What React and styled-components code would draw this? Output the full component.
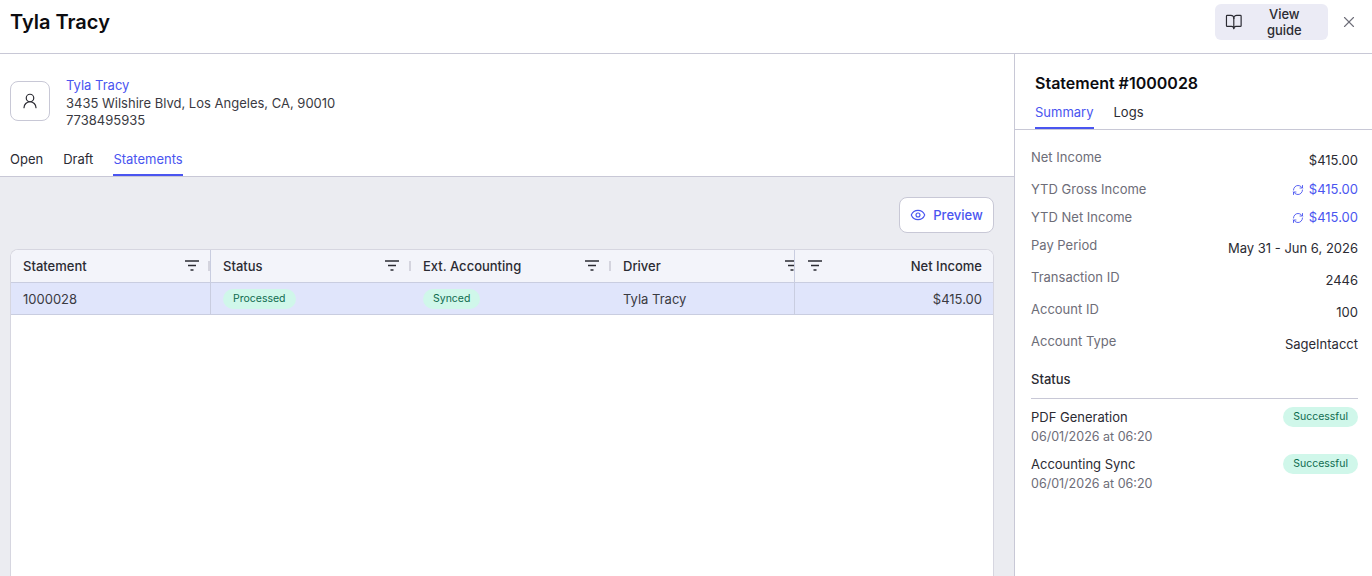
import React from 'react'
import styled, { createGlobalStyle } from 'styled-components'
import { BookOpen, X, UserRound, Eye, RefreshCw } from 'lucide-react'

const GlobalStyle = createGlobalStyle`
  html, body {
    margin: 0;
    padding: 0;
    height: 100%;
    overflow: hidden;
    background: #fff;
    font-family: Inter, "Liberation Sans", sans-serif;
    color: #2b2b33;
  }
  * { box-sizing: border-box; }
`

const Page = styled.div`
  width: 1372px;
  height: 576px;
  display: flex;
  flex-direction: column;
  overflow: hidden;
`

const TopBar = styled.header`
  height: 54px;
  flex: none;
  display: flex;
  align-items: center;
  justify-content: space-between;
  padding: 0 14px 10px 10px;
  padding-bottom: 10px;
  border-bottom: 1px solid #c8c8d6;
`

const Title = styled.h1`
  margin: 0;
  font-size: 20px;
  line-height: 24px;
  font-weight: 600;
  color: #0c0c10;
`

const TopActions = styled.div`
  display: flex;
  align-items: center;
  gap: 12px;
`

const GuideButton = styled.button`
  height: 36px;
  width: 113px;
  padding: 0 10px;
  display: flex;
  align-items: center;
  gap: 8px;
  border: 0;
  border-radius: 6px;
  background: #ebebf5;
  color: #2b2b33;
  font: 500 13px Inter, sans-serif;
`

const CloseButton = styled.span`
  display: flex;
  color: #6d6d78;
`

const Body = styled.div`
  flex: 1;
  min-height: 0;
  display: flex;
`

const Main = styled.main`
  width: 1014px;
  flex: none;
  display: flex;
  flex-direction: column;
`

const DriverPanel = styled.section`
  height: 123px;
  flex: none;
  padding-top: 23px;
  background: #fff;
  border-bottom: 1px solid #c8c8d6;
  display: flex;
  flex-direction: column;
  justify-content: space-between;
`

const DriverInfo = styled.div`
  display: flex;
  gap: 16px;
  padding-left: 10px;
`

const Avatar = styled.div`
  width: 40px;
  height: 40px;
  margin-top: 4px;
  display: flex;
  align-items: center;
  justify-content: center;
  border: 1px solid #c8c8d6;
  border-radius: 8px;
  color: #2b2b33;
`

const DriverLines = styled.div`
  font-size: 13px;
  line-height: 17.5px;
  color: #3a3a42;
`

const DriverName = styled.div`
  color: #4a55f0;
`

const Tabs = styled.nav`
  display: flex;
  gap: ${props => props.$gap}px;
  padding-left: ${props => props.$inset}px;
`

const Tab = styled.span`
  height: 25px;
  font-size: 13px;
  line-height: 17px;
  font-weight: 400;
  color: ${props => (props.$active ? '#4a55f0' : '#2b2b33')};
  border-bottom: 2px solid ${props => (props.$active ? '#4a55f0' : 'transparent')};
`

const Content = styled.div`
  flex: 1;
  min-height: 0;
  background: #ebecf1;
  padding: 20px 20px 0 10px;
  display: flex;
  flex-direction: column;
`

const Toolbar = styled.div`
  display: flex;
  justify-content: flex-end;
  margin-bottom: 16px;
`

const PreviewButton = styled.button`
  width: 95px;
  height: 36px;
  display: flex;
  align-items: center;
  justify-content: center;
  gap: 7px;
  background: #fff;
  border: 1px solid #c8c8d6;
  border-radius: 8px;
  color: #4a55f0;
  font: 500 13px Inter, sans-serif;
`

const Table = styled.div`
  flex: 1;
  min-height: 0;
  background: #fff;
  border: 1px solid #d6d6e0;
  border-bottom: 0;
  border-radius: 8px 8px 0 0;
  overflow: hidden;
`

const Row = styled.div`
  display: flex;
  height: ${props => (props.$head ? 33 : 32)}px;
  background: ${props => (props.$head ? '#f3f4fa' : '#e0e5fb')};
  border-bottom: 1px solid #c9cde0;
  font-size: 13px;
  font-weight: ${props => (props.$head ? 500 : 400)};
  color: ${props => (props.$head ? '#2b2b33' : '#3a3a42')};
`

const Cell = styled.div`
  position: relative;
  flex: none;
  width: ${props => props.$width}px;
  padding: 0 12px;
  display: flex;
  align-items: center;
  overflow: hidden;
  white-space: nowrap;
  justify-content: ${props => (props.$right ? 'flex-end' : 'flex-start')};
  border-right: ${props => (props.$pinned ? '1px solid #c9cde0' : '0')};
  border-left: ${props => (props.$pinnedLeft ? '1px solid #c9cde0' : '0')};
`

const FilterMark = styled.svg`
  position: absolute;
  top: 9px;
  left: ${props => props.$left}px;
  color: #2b2b33;
`

const Grip = styled.span`
  position: absolute;
  top: 11px;
  right: 0;
  width: 2px;
  height: 10px;
  background: #d4d4de;
`

const Pill = styled.span`
  display: inline-block;
  height: 20px;
  padding: 0 10px;
  line-height: 20px;
  border-radius: 10px;
  background: #d0f7ea;
  color: #0e6b4f;
  font-size: 10.5px;
  font-weight: 400;
`

const Side = styled.aside`
  flex: 1;
  min-width: 0;
  border-left: 1px solid #c8c8d6;
  display: flex;
  flex-direction: column;
`

const SideHead = styled.div`
  height: 76px;
  flex: none;
  padding-top: 19px;
  border-bottom: 1px solid #c8c8d6;
  display: flex;
  flex-direction: column;
  justify-content: space-between;
`

const SideTitle = styled.h2`
  margin: 0;
  padding-left: 20px;
  font-size: 16px;
  line-height: 20px;
  font-weight: 600;
  color: #0c0c10;
`

const SideBody = styled.div`
  padding: 19px 14px 0 16px;
`

const InfoRow = styled.div`
  display: flex;
  justify-content: space-between;
  height: ${props => props.$height}px;
  font-size: 13px;
  line-height: 17px;
`

const InfoLabel = styled.span`
  color: #6d6d78;
`

const InfoValue = styled.span`
  display: flex;
  align-items: center;
  gap: 5px;
  height: 17px;
  margin-top: ${props => props.$drop}px;
  color: ${props => (props.$link ? '#4a55f0' : '#2b2b33')};
`

const StatusHeading = styled.div`
  margin-top: 14px;
  padding-bottom: 10px;
  border-bottom: 1px solid #c8c8d6;
  font-size: 13px;
  line-height: 17px;
  font-weight: 500;
`

const StatusList = styled.div`
  padding-top: 8px;
  display: flex;
  flex-direction: column;
  gap: 8px;
`

const StatusItem = styled.div`
  display: flex;
  justify-content: space-between;
  align-items: flex-start;
`

const StatusName = styled.div`
  font-size: 13px;
  line-height: 20px;
  color: #2b2b33;
`

const StatusTime = styled.div`
  font-size: 12.5px;
  line-height: 19px;
  color: #6d6d78;
`

const Filter = ({ left }) => (
  <FilterMark $left={left} width="16" height="14" viewBox="0 0 16 14" fill="none" stroke="currentColor" strokeWidth="1.5">
    <path d="M1 2h14M4 6.5h8M6.5 11h3" />
  </FilterMark>
)

const columns = [
  { label: 'Statement', width: 200, filter: 173, pinned: true },
  { label: 'Status', width: 200, filter: 173 },
  { label: 'Ext. Accounting', width: 200, filter: 173 },
  { label: 'Driver', width: 183, filter: 173, clip: true },
]

const info = [
  { label: 'Net Income', value: '$415.00', height: 32, drop: 3 },
  { label: 'YTD Gross Income', value: '$415.00', height: 28, drop: 0, link: true },
  { label: 'YTD Net Income', value: '$415.00', height: 28, drop: 0, link: true },
  { label: 'Pay Period', value: 'May 31 - Jun 6, 2026', height: 32, drop: 3 },
  { label: 'Transaction ID', value: '2446', height: 32, drop: 3 },
  { label: 'Account ID', value: '100', height: 32, drop: 3 },
  { label: 'Account Type', value: 'SageIntacct', height: 24, drop: 3 },
]

const App = () => {
  return (
    <Page>
      <GlobalStyle />
      <TopBar>
        <Title>Tyla Tracy</Title>
        <TopActions>
          <GuideButton>
            <BookOpen size={18} strokeWidth={1.6} />
            View guide
          </GuideButton>
          <CloseButton><X size={18} strokeWidth={1.5} /></CloseButton>
        </TopActions>
      </TopBar>
      <Body>
        <Main>
          <DriverPanel>
            <DriverInfo>
              <Avatar><UserRound size={18} strokeWidth={1.6} /></Avatar>
              <DriverLines>
                <DriverName>Tyla Tracy</DriverName>
                <div>3435 Wilshire Blvd, Los Angeles, CA, 90010</div>
                <div>7738495935</div>
              </DriverLines>
            </DriverInfo>
            <Tabs $gap={20} $inset={10}>
              <Tab>Open</Tab>
              <Tab>Draft</Tab>
              <Tab $active>Statements</Tab>
            </Tabs>
          </DriverPanel>
          <Content>
            <Toolbar>
              <PreviewButton>
                <Eye size={16} strokeWidth={1.7} />
                Preview
              </PreviewButton>
            </Toolbar>
            <Table>
              <Row $head>
                {columns.map((col) => (
                  <Cell key={col.label} $width={col.width} $pinned={col.pinned}>
                    {col.label}
                    <Filter left={col.filter} />
                    {!col.clip && <Grip />}
                  </Cell>
                ))}
                <Cell $width={200} $right $pinnedLeft>
                  <Filter left={12} />
                  Net Income
                </Cell>
              </Row>
              <Row>
                <Cell $width={200} $pinned>1000028</Cell>
                <Cell $width={200}><Pill>Processed</Pill></Cell>
                <Cell $width={200}><Pill>Synced</Pill></Cell>
                <Cell $width={183}>Tyla Tracy</Cell>
                <Cell $width={200} $right $pinnedLeft>$415.00</Cell>
              </Row>
            </Table>
          </Content>
        </Main>
        <Side>
          <SideHead>
            <SideTitle>Statement #1000028</SideTitle>
            <Tabs $gap={20} $inset={20}>
              <Tab $active>Summary</Tab>
              <Tab>Logs</Tab>
            </Tabs>
          </SideHead>
          <SideBody>
            {info.map((item) => (
              <InfoRow key={item.label} $height={item.height}>
                <InfoLabel>{item.label}</InfoLabel>
                <InfoValue $drop={item.drop} $link={item.link}>
                  {item.link && <RefreshCw size={12} strokeWidth={1.8} />}
                  {item.value}
                </InfoValue>
              </InfoRow>
            ))}
            <StatusHeading>Status</StatusHeading>
            <StatusList>
              <StatusItem>
                <div>
                  <StatusName>PDF Generation</StatusName>
                  <StatusTime>06/01/2026 at 06:20</StatusTime>
                </div>
                <Pill>Successful</Pill>
              </StatusItem>
              <StatusItem>
                <div>
                  <StatusName>Accounting Sync</StatusName>
                  <StatusTime>06/01/2026 at 06:20</StatusTime>
                </div>
                <Pill>Successful</Pill>
              </StatusItem>
            </StatusList>
          </SideBody>
        </Side>
      </Body>
    </Page>
  )
}

export default App
